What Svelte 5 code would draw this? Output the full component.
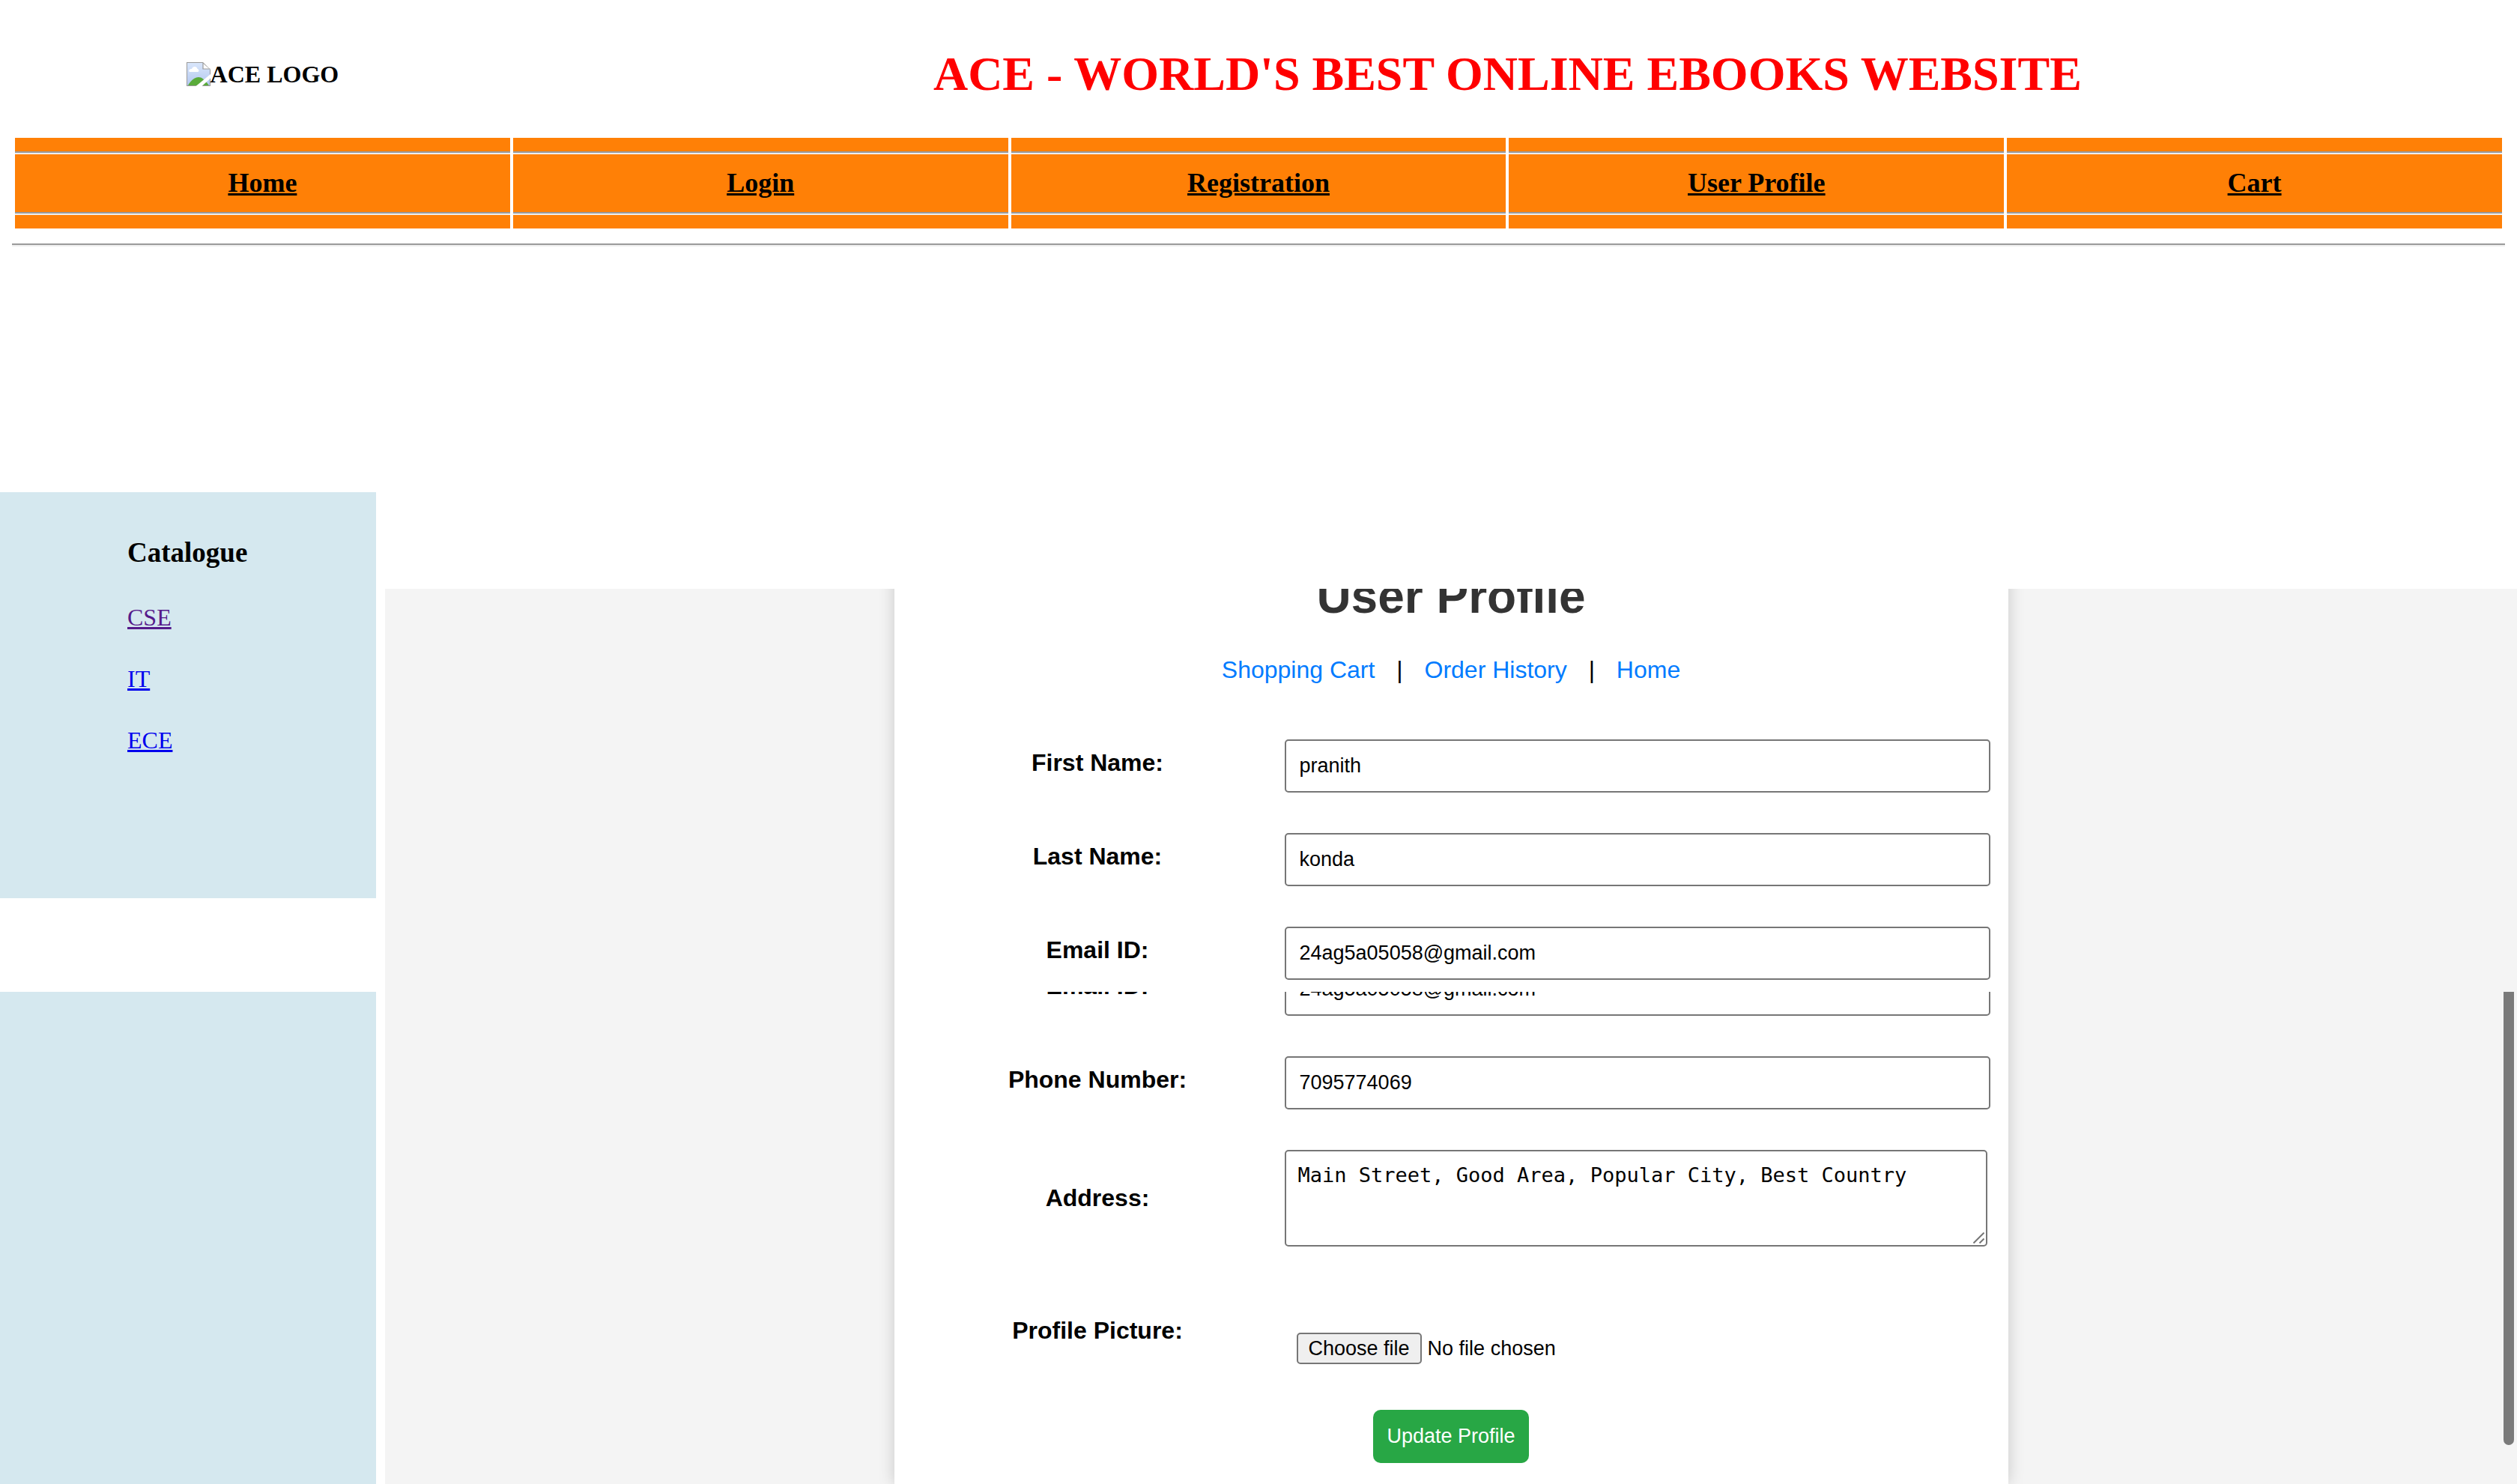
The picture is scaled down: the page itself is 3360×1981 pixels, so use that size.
<script>
  const navLinks = ['Home', 'Login', 'Registration', 'User Profile', 'Cart'];
  const catalogue = [
    { name: 'CSE', visited: true },
    { name: 'IT', visited: false },
    { name: 'ECE', visited: false }
  ];

  let profile = $state({
    firstName: 'pranith',
    lastName: 'konda',
    email: '24ag5a05058@gmail.com',
    phone: '7095774069',
    address: 'Main Street, Good Area, Popular City, Best Country'
  });
</script>

{#snippet field(id, label, type, key)}
  <div class="row">
    <label for={id}>{label}</label>
    <input {id} {type} bind:value={profile[key]} />
  </div>
{/snippet}

<div class="page">
  <header>
    <div class="brand">
      <div class="logo">
        <svg viewBox="0 0 32 32" aria-hidden="true">
          <defs>
            <linearGradient id="sky" x1="0" y1="0" x2="0" y2="1">
              <stop offset="0" stop-color="#d9e6fb" />
              <stop offset="1" stop-color="#b3c8f0" />
            </linearGradient>
          </defs>
          <path d="M0 0H22L32 10V32H0Z" fill="#9a9a9a" />
          <path d="M1 1H22V9H31V31H1Z" fill="url(#sky)" />
          <path d="M22 1.5L30.5 9H22Z" fill="#fff" />
          <path d="M22 1V9H31.5" fill="none" stroke="#9a9a9a" stroke-width="1.2" />
          <path d="M5 13C2 13 3 8.500 7 9C8 5 14 5 14.500 9C17 9.500 17 13 15 13Z" fill="#fff" />
          <path d="M2 31C6 24 11 20 16 20C20 20 24 23 30 31Z" fill="#5aab3a" />
          <path d="M12.500 32L32 16V21.500L20.500 32Z" fill="#fff" />
        </svg><span>ACE LOGO</span>
      </div>
      <h1>ACE - WORLD'S BEST ONLINE EBOOKS WEBSITE</h1>
    </div>
    <nav>
      {#each navLinks as name}
        <div class="tab"><div class="tab-inner"><a href="#top">{name}</a></div></div>
      {/each}
    </nav>
    <hr />
  </header>

  <div class="body">
    <aside>
      <div class="catalogue">
        <div class="catalogue-list">
          <h3>Catalogue</h3>
          {#each catalogue as item}
            <a href="#catalogue" class:visited={item.visited}>{item.name}</a>
          {/each}
        </div>
      </div>
      <div class="filler"></div>
    </aside>

    <main>
      <section class="frame upper">
        <div class="card">
          <h2>User Profile</h2>
          <p class="links">
            <a href="#cart">Shopping Cart</a> | <a href="#orders">Order History</a> | <a href="#home">Home</a>
          </p>
          {@render field('first-name', 'First Name:', 'text', 'firstName')}
          {@render field('last-name', 'Last Name:', 'text', 'lastName')}
          {@render field('email', 'Email ID:', 'email', 'email')}
        </div>
      </section>

      <section class="frame lower">
        <form class="card" onsubmit={(e) => e.preventDefault()}>
          {@render field('email-confirm', 'Email ID:', 'email', 'email')}
          {@render field('phone', 'Phone Number:', 'tel', 'phone')}
          <div class="row">
            <label for="address">Address:</label>
            <div class="area">
              <textarea id="address" bind:value={profile.address}></textarea>
              <svg class="grip" viewBox="0 0 15 15" aria-hidden="true">
                <path d="M0.500 14.500L14.500 0.500M8.500 14.500L14.500 8.500" />
              </svg>
            </div>
          </div>
          <div class="row picture">
            <label for="picture">Profile Picture:</label>
            <div class="file">
              <span class="choose">Choose file</span>
              <span>No file chosen</span>
              <input id="picture" type="file" />
            </div>
          </div>
          <button type="submit">Update Profile</button>
        </form>
        <div class="scroll-thumb"></div>
      </section>
    </main>
  </div>
</div>

<style>
  :global(body) {
    margin: 0;
    background: #fff;
  }

  .page {
    display: flex;
    flex-direction: column;
    min-height: 100vh;
    font: 32px/36px 'Liberation Serif', 'Times New Roman', serif;
    color: #000;
  }

  h1, h2, h3, p {
    margin: 0;
  }

  header {
    padding: 0 16px;
  }

  .brand, nav {
    display: grid;
    grid-template-columns: repeat(5, 1fr);
    gap: 4px;
    margin: 0 4px;
  }

  .brand {
    align-items: center;
    padding: 62px 0 48px;
  }

  .logo {
    display: flex;
    justify-content: center;
    align-items: center;
    font-weight: bold;
  }

  .logo svg {
    width: 32px;
    height: 32px;
  }

  h1 {
    grid-column: span 4;
    text-align: center;
    font-size: 64px;
    line-height: 74px;
    color: #f00;
  }

  .tab {
    padding: 18px 0;
    background: #ff8006;
  }

  .tab-inner {
    padding: 20px 0 21px;
    text-align: center;
    font-size: 36px;
    line-height: 40px;
    font-weight: bold;
    border-top: 2px solid #9a9a9a;
    border-bottom: 2px solid #eee;
    box-shadow: inset 0 2px #eee, inset 0 -2px #9a9a9a;
  }

  .tab a {
    color: #000;
  }

  hr {
    margin: 20px 0 0;
    border: 0;
    border-top: 2px solid #9a9a9a;
    border-bottom: 2px solid #eee;
  }

  .body {
    flex: 1;
    display: flex;
    gap: 12px;
    padding-top: 328px;
  }

  aside {
    flex: 0 0 502px;
    display: flex;
    flex-direction: column;
    gap: 125px;
  }

  .catalogue {
    padding: 59px 0 193px 170px;
    background: #d5e8ef;
  }

  .catalogue-list {
    display: flex;
    flex-direction: column;
    align-items: flex-start;
    gap: 46px;
  }

  h3 {
    font-size: 37px;
    line-height: 44px;
  }

  .catalogue a {
    color: #00e;
  }

  .catalogue a.visited {
    color: #551a8b;
  }

  .filler {
    flex: 1;
    background: #d5e8ef;
  }

  main {
    flex: 1;
    display: flex;
    flex-direction: column;
    margin-top: 129px;
    font-family: 'Liberation Sans', Arial, sans-serif;
  }

  .frame {
    position: relative;
    display: flex;
    justify-content: center;
    overflow: hidden;
    background: #f4f4f4;
  }

  .upper {
    height: 538px;
  }

  .lower {
    flex: 1;
  }

  .card {
    box-sizing: border-box;
    width: 100%;
    max-width: 1487px;
    padding: 0 24px 28px;
    background: #fff;
    box-shadow: 0 0 20px rgba(0, 0, 0, 0.18);
  }

  .upper .card {
    height: 600px;
    margin-top: -27px;
  }

  .lower .card {
    margin-top: -66px;
  }

  h2 {
    font-size: 64px;
    line-height: 74px;
    text-align: center;
    color: #333;
  }

  .links {
    margin: 43px 0 48px;
    text-align: center;
  }

  .links a {
    margin: 0 20px;
    color: #007bff;
    text-decoration: none;
  }

  .row {
    display: grid;
    grid-template-columns: 497px 1fr;
    align-items: center;
    padding: 27px 0;
  }

  label {
    padding: 0 2px 10px 0;
    font-weight: bold;
    text-align: center;
  }

  input, textarea, button, .file {
    box-sizing: border-box;
    font-family: inherit;
    font-size: 27px;
    line-height: 31px;
    color: #000;
  }

  input, textarea {
    border: 2px solid #767676;
    border-radius: 5px;
    background: #fff;
  }

  input {
    width: 100%;
    height: 71px;
    padding: 0 18px;
  }

  .area {
    position: relative;
    margin: 0 4px 8px 0;
  }

  textarea {
    display: block;
    width: 100%;
    height: 129px;
    padding: 16px;
    font-family: 'DejaVu Sans Mono', monospace;
    resize: none;
  }

  .grip {
    position: absolute;
    right: 4px;
    bottom: 4px;
    width: 15px;
    height: 15px;
    fill: none;
    stroke: #767676;
    stroke-width: 2;
  }

  .picture {
    padding: 42px 0 61px;
  }

  .file {
    position: relative;
    display: flex;
    align-items: center;
    gap: 8px;
    margin-top: 38px;
    padding-left: 16px;
  }

  .file input {
    position: absolute;
    inset: 0;
    height: 100%;
    opacity: 0;
  }

  .choose {
    box-sizing: border-box;
    height: 42px;
    padding: 4px 14px;
    border: 2px solid #767676;
    border-radius: 5px;
    background: #efefef;
  }

  button {
    display: block;
    height: 71px;
    margin: 0 auto;
    padding: 0 18px;
    border: 0;
    border-radius: 10px;
    background: #28a745;
    color: #fff;
  }

  .scroll-thumb {
    position: absolute;
    top: 0;
    right: 4px;
    bottom: 52px;
    width: 14px;
    border-radius: 0 0 7px 7px;
    background: #7a7a7a;
  }
</style>
